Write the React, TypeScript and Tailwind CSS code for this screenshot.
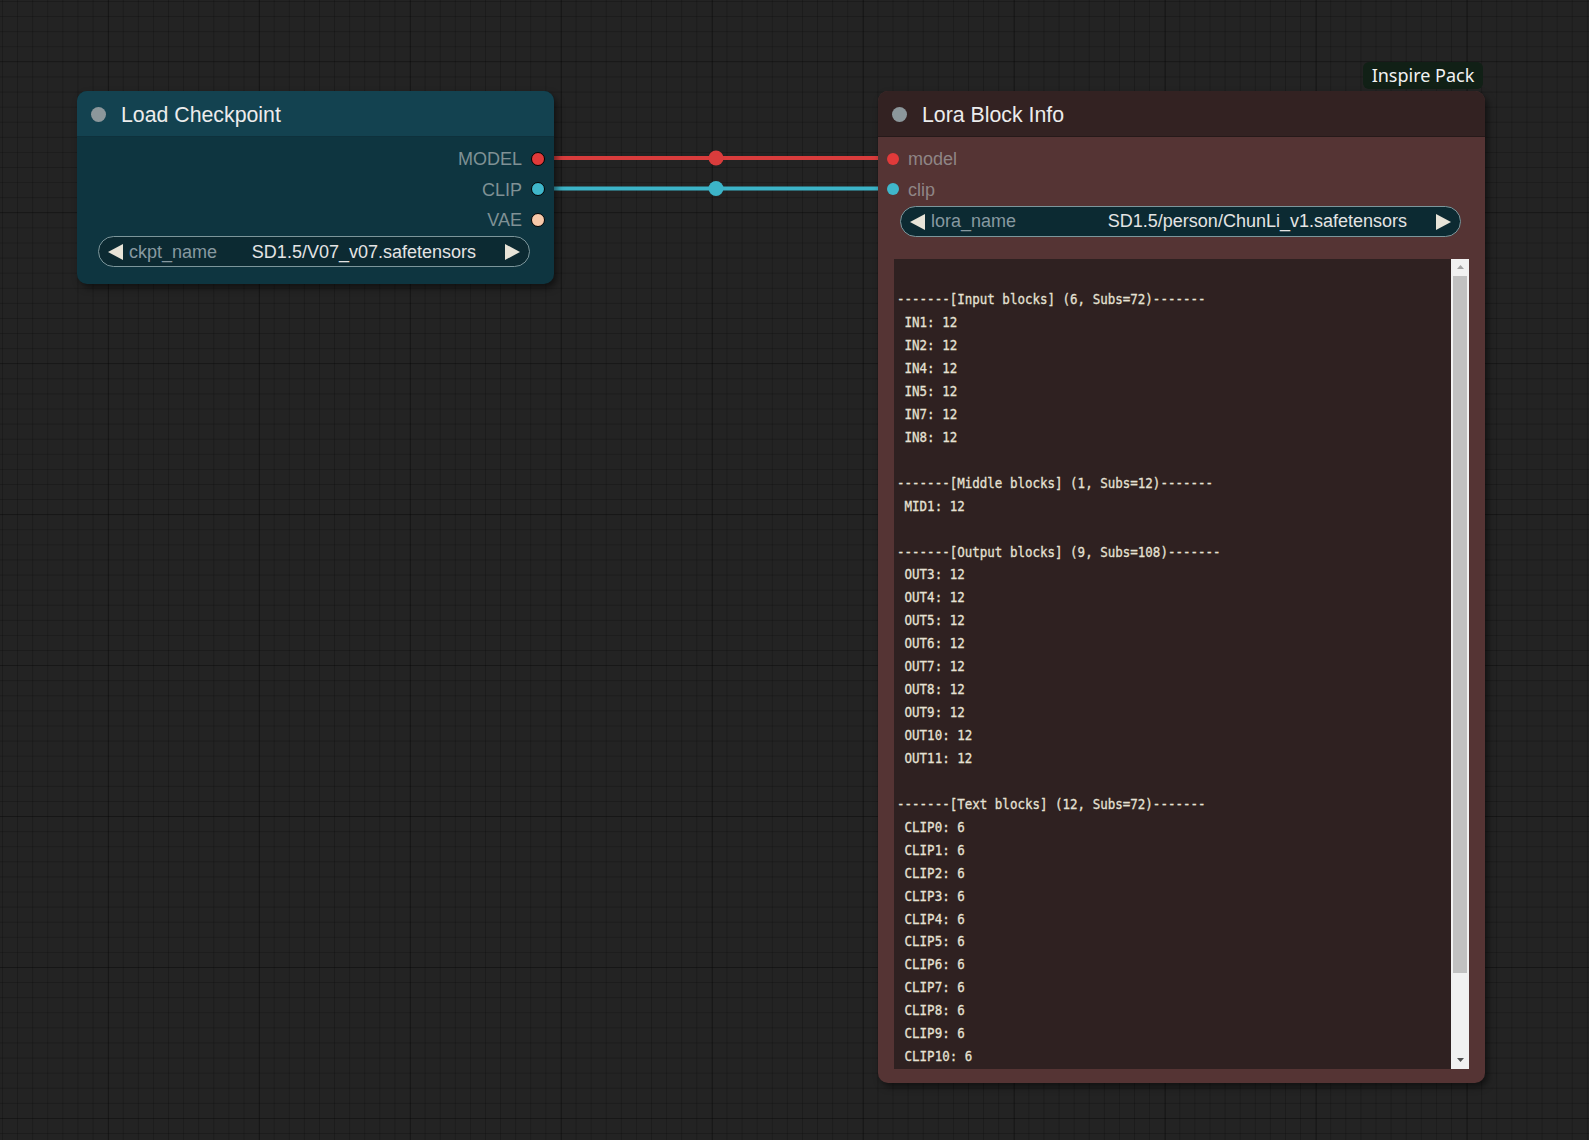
import React from 'react';

const LINES = [
  '',
  '-------[Input blocks] (6, Subs=72)-------',
  ' IN1: 12',
  ' IN2: 12',
  ' IN4: 12',
  ' IN5: 12',
  ' IN7: 12',
  ' IN8: 12',
  '',
  '-------[Middle blocks] (1, Subs=12)-------',
  ' MID1: 12',
  '',
  '-------[Output blocks] (9, Subs=108)-------',
  ' OUT3: 12',
  ' OUT4: 12',
  ' OUT5: 12',
  ' OUT6: 12',
  ' OUT7: 12',
  ' OUT8: 12',
  ' OUT9: 12',
  ' OUT10: 12',
  ' OUT11: 12',
  '',
  '-------[Text blocks] (12, Subs=72)-------',
  ' CLIP0: 6',
  ' CLIP1: 6',
  ' CLIP2: 6',
  ' CLIP3: 6',
  ' CLIP4: 6',
  ' CLIP5: 6',
  ' CLIP6: 6',
  ' CLIP7: 6',
  ' CLIP8: 6',
  ' CLIP9: 6',
  ' CLIP10: 6',
];

const Arrow = ({ dir }: { dir: 'left' | 'right' }) => (
  <svg width="15" height="16" viewBox="0 0 15 16" className="shrink-0">
    {dir === 'left' ? (
      <polygon points="15,0 15,16 0,8" fill="#e8e4d8" />
    ) : (
      <polygon points="0,0 0,16 15,8" fill="#e8e4d8" />
    )}
  </svg>
);

const Combo = ({ label, value }: { label: string; value: string }) => (
  <div className="flex items-center h-[31px] rounded-full border border-[#7c969b] bg-[#0c2a32] pl-[9px] pr-[9px] pt-[1px] font-['Liberation_Sans',sans-serif] text-[18px]">
    <Arrow dir="left" />
    <span className="ml-[6px] text-[#8799a0]">{label}</span>
    <span className="flex-1" />
    <span className="text-[#e4e4e4]">{value}</span>
    <span className="ml-[29px] flex">
      <Arrow dir="right" />
    </span>
  </div>
);

const Title = ({ text }: { text: string }) => (
  <div className="flex items-center h-[46px] pl-[14px] pt-[1px] border-b border-black/25">
    <span className="w-[15px] h-[15px] rounded-full bg-[#8c979b]" />
    <span className="ml-[15px] pt-[4px] text-[21.3px] text-[#ececec] font-['Liberation_Sans',sans-serif]">{text}</span>
  </div>
);

export default function App() {
  return (
    <div className="relative w-[1589px] h-[1140px] overflow-hidden bg-[#232323] bg-[linear-gradient(to_right,rgba(0,0,0,0.26)_1.5px,transparent_1.5px),linear-gradient(to_bottom,rgba(0,0,0,0.2)_1.5px,transparent_1.5px),linear-gradient(to_right,rgba(0,0,0,0.2)_1px,transparent_1px),linear-gradient(to_bottom,rgba(0,0,0,0.2)_1px,transparent_1px)] bg-[size:151px_151px,151px_151px,15.1px_15.1px,15.1px_15.1px] bg-[position:108px_61px,108px_61px,2px_1px,2px_1px]">
      {/* links */}
      <svg className="absolute inset-0" width="1589" height="1140">
        <line x1="545" y1="158" x2="885" y2="158" stroke="#d93c3c" strokeWidth="4" />
        <circle cx="716" cy="158" r="7.5" fill="#d93c3c" />
        <line x1="545" y1="188.5" x2="885" y2="188.5" stroke="#3cb4c8" strokeWidth="4" />
        <circle cx="716" cy="188.5" r="7.5" fill="#3cb4c8" />
      </svg>

      {/* Load Checkpoint */}
      <div className="absolute left-[77px] top-[91px] w-[477px] rounded-[10px] overflow-hidden bg-[#0e3540] shadow-[3px_4px_7px_rgba(0,0,0,0.5)]">
        <div className="bg-[#134250]">
          <Title text="Load Checkpoint" />
        </div>
        <div className="pt-[6px] font-['Liberation_Sans',sans-serif] text-[18px] text-[#7f9195]">
          {[
            ['MODEL', 'bg-[#e03a3a]'],
            ['CLIP', 'bg-[#3fb7cb]'],
            ['VAE', 'bg-[#f7c9aa]'],
          ].map(([name, color]) => (
            <div key={name} className="flex items-center justify-end h-[30.5px] pr-[9px]">
              <span className="pt-[3px]">{name}</span>
              <span className={`ml-[9px] mt-[1px] w-[14px] h-[14px] rounded-full border border-black ${color}`} />
            </div>
          ))}
          <div className="mt-[1.75px] ml-[21px] mr-[24px] mb-[17px]">
            <Combo label="ckpt_name" value="SD1.5/V07_v07.safetensors" />
          </div>
        </div>
      </div>

      {/* badge */}
      <div className="absolute left-[1363px] top-[62px] w-[120px] h-[27px] rounded-[6px] bg-[#112016] flex items-center justify-center font-['Noto_Sans',sans-serif] text-[18px] text-[#f2f2f2]">
        Inspire Pack
      </div>

      {/* Lora Block Info */}
      <div className="absolute left-[878px] top-[91px] w-[607px] rounded-[10px] overflow-hidden bg-[#553434] shadow-[3px_4px_7px_rgba(0,0,0,0.5)]">
        <div className="bg-[#332222]">
          <Title text="Lora Block Info" />
        </div>
        <div className="pt-[6px] font-['Liberation_Sans',sans-serif] text-[18px] text-[#8f8585]">
          {[
            ['model', 'bg-[#e03a3a]'],
            ['clip', 'bg-[#3fb7cb]'],
          ].map(([name, color]) => (
            <div key={name} className="flex items-center h-[30.5px] pl-[9px]">
              <span className={`mt-[1px] w-[12px] h-[12px] rounded-full ${color}`} />
              <span className="ml-[9px] pt-[3px]">{name}</span>
            </div>
          ))}
          <div className="mt-[1.75px] ml-[22px] mr-[24px]">
            <Combo label="lora_name" value="SD1.5/person/ChunLi_v1.safetensors" />
          </div>
          <div className="mt-[22px] mx-[16px] mb-[14px] h-[810px] flex">
            <div className="flex-1 overflow-hidden bg-[#2f2121] pl-[3px] pt-[6.5px]">
              <pre className="font-['DejaVu_Sans_Mono',monospace] text-[14.5px] leading-[22.94px] text-[#e6e1d4] [-webkit-text-stroke:0.3px_#e6e1d4] whitespace-pre origin-top-left scale-x-[0.862]">
                {LINES.join('\n')}
              </pre>
            </div>
            <div className="w-[18px] bg-[#f1f1f1] flex flex-col items-center">
              <div className="h-[17px] flex items-center justify-center">
                <svg width="7" height="4" viewBox="0 0 7 4">
                  <polygon points="0,4 7,4 3.5,0" fill="#a3a3a3" />
                </svg>
              </div>
              <div className="w-[14px] h-[697px] bg-[#c1c1c1]" />
              <div className="flex-1" />
              <div className="h-[17px] flex items-center justify-center">
                <svg width="7" height="4" viewBox="0 0 7 4">
                  <polygon points="0,0 7,0 3.5,4" fill="#505050" />
                </svg>
              </div>
            </div>
          </div>
        </div>
      </div>
    </div>
  );
}
